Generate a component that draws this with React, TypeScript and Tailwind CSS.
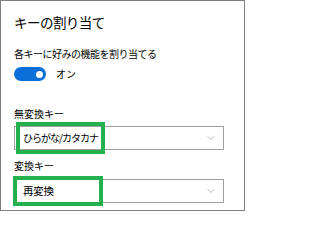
import { ChevronDown } from "lucide-react";

const font = { fontFamily: '"Noto Sans CJK JP", "Noto Sans", sans-serif' };

function Select({ value, text, mark }: { value: string; text: string; mark: string }) {
  return (
    <div className="relative w-[210px] h-[24px] border border-[#a0a0a0] bg-white flex items-center pl-[8px] pr-[6px]">
      <span className={`flex-1 leading-none text-black ${text}`}>{value}</span>
      <ChevronDown className="w-[12px] h-[12px] text-[#8a8a8a]" strokeWidth={1.2} />
      {/* green highlight frame */}
      <div className={`absolute border-[4px] border-[#22b14c] ${mark}`} />
    </div>
  );
}

export default function App() {
  return (
    <div style={font} className="w-[246px] h-[212px] bg-white">
      <div className="w-[245px] h-[211px] border border-[#7f7f7f] pl-[13px] pt-[12px] flex flex-col">
        <h1 className="text-[13.5px] leading-[18px] text-black tracking-[-0.04em]">キーの割り当て</h1>

        <p className="mt-[17px] text-[10px] leading-[12px] text-black tracking-[-0.05em]">各キーに好みの機能を割り当てる</p>

        <div className="mt-[7px] flex items-center gap-[10px]">
          <div className="w-[32px] h-[14px] rounded-full bg-[#0a6fd8] flex items-center justify-end pr-[3px]">
            <div className="w-[7px] h-[7px] rounded-full bg-white" />
          </div>
          <span className="text-[10px] leading-none text-black">オン</span>
        </div>

        <p className="mt-[27px] text-[10px] leading-[12px] text-black">無変換キー</p>
        <div className="mt-[6px]">
          <Select
            value="ひらがな/カタカナ"
            text="text-[10px] tracking-[-0.1em]"
            mark="left-[1px] -top-[5px] w-[89px] h-[32px]"
          />
        </div>

        <p className="mt-[10px] text-[10px] leading-[12px] text-black">変換キー</p>
        <div className="mt-[7px]">
          <Select
            value="再変換"
            text="text-[10.5px] tracking-[-0.02em]"
            mark="-left-[2px] -top-[4px] w-[90px] h-[30px]"
          />
        </div>
      </div>
    </div>
  );
}
